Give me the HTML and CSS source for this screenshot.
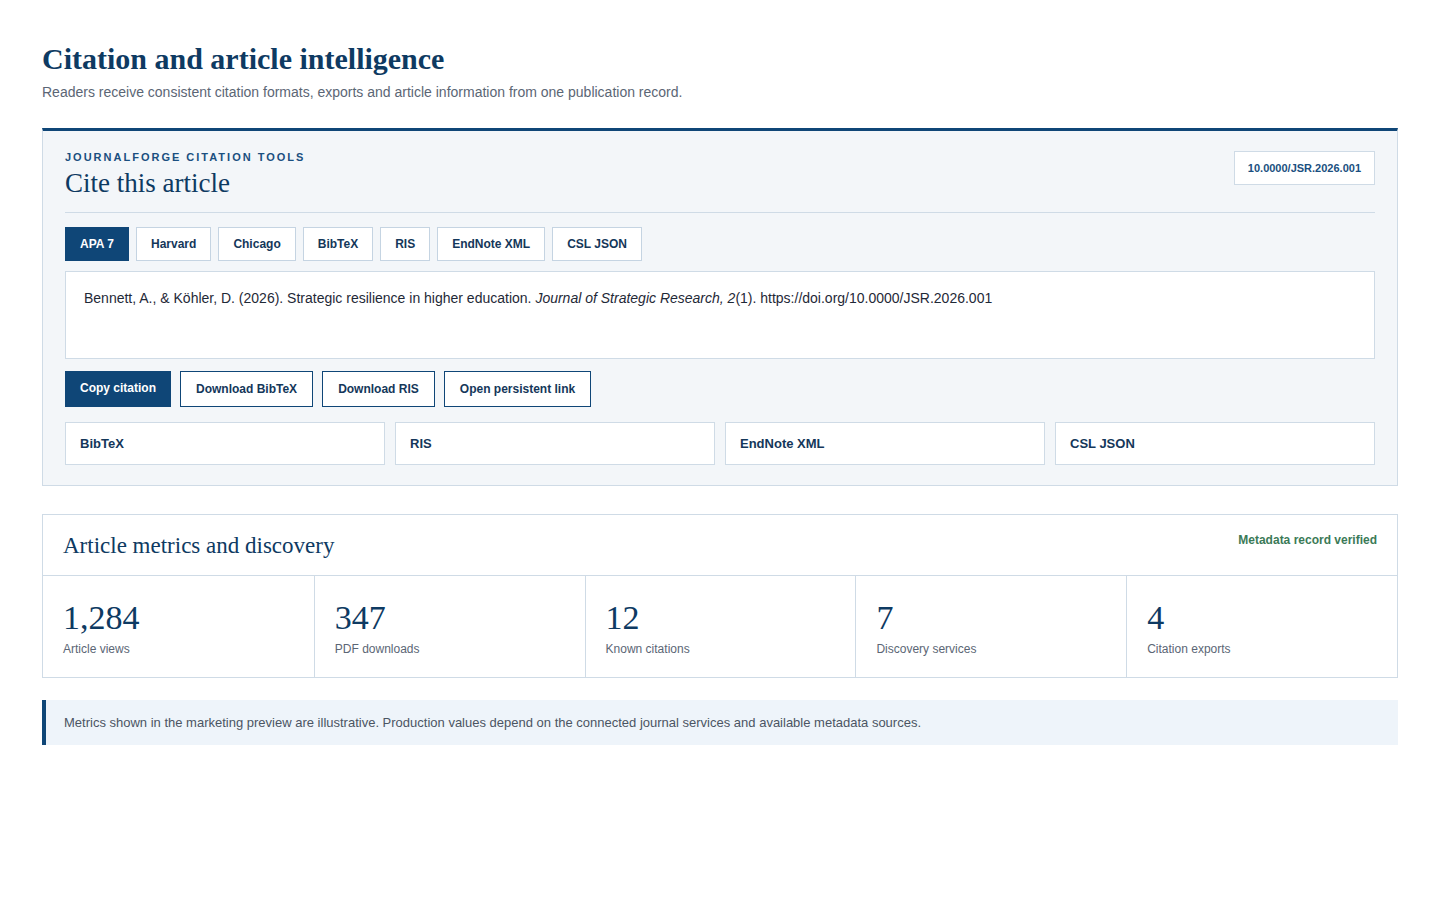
FILE: index.html
```html
<!DOCTYPE html>
<html lang="en">
<head>
  <meta charset="UTF-8">
  <title>Citation and article intelligence</title>
  <link rel="stylesheet" href="styles.css">
</head>
<body>

<h1>Citation and article intelligence</h1>
<p class="lead">Readers receive consistent citation formats, exports and article information from one publication record.</p>

<section class="cite-card">
  <div class="cite-head">
    <div>
      <div class="eyebrow">JournalForge citation tools</div>
      <h2>Cite this article</h2>
    </div>
    <span class="doi">10.0000/JSR.2026.001</span>
  </div>

  <div class="tabs">
    <button class="tab active">APA 7</button>
    <button class="tab">Harvard</button>
    <button class="tab">Chicago</button>
    <button class="tab">BibTeX</button>
    <button class="tab">RIS</button>
    <button class="tab">EndNote XML</button>
    <button class="tab">CSL JSON</button>
  </div>

  <div class="citation">
    Bennett, A., &amp; Köhler, D. (2026). Strategic resilience in higher education. <em>Journal of Strategic Research, 2</em>(1). https://doi.org/10.0000/JSR.2026.001
  </div>

  <div class="actions">
    <button class="btn primary">Copy citation</button>
    <button class="btn">Download BibTeX</button>
    <button class="btn">Download RIS</button>
    <button class="btn">Open persistent link</button>
  </div>

  <div class="exports">
    <div class="export">BibTeX</div>
    <div class="export">RIS</div>
    <div class="export">EndNote XML</div>
    <div class="export">CSL JSON</div>
  </div>
</section>

<section class="metrics">
  <div class="metrics-head">
    <h2>Article metrics and discovery</h2>
    <span class="verified">Metadata record verified</span>
  </div>
  <div class="stats">
    <div class="stat"><div class="num">1,284</div><div class="label">Article views</div></div>
    <div class="stat"><div class="num">347</div><div class="label">PDF downloads</div></div>
    <div class="stat"><div class="num">12</div><div class="label">Known citations</div></div>
    <div class="stat"><div class="num">7</div><div class="label">Discovery services</div></div>
    <div class="stat"><div class="num">4</div><div class="label">Citation exports</div></div>
  </div>
</section>

<p class="note">Metrics shown in the marketing preview are illustrative. Production values depend on the connected journal services and available metadata sources.</p>

</body>
</html>
```

FILE: styles.css
```css
* {
  box-sizing: border-box;
  margin: 0;
  padding: 0;
}

body {
  font-family: "Liberation Sans", Arial, sans-serif;
  background: #fff;
  color: #1f2937;
  padding: 41px 42px;
}

h1 {
  font-family: "Liberation Serif", "Times New Roman", serif;
  font-size: 30px;
  font-weight: bold;
  color: #0e3a62;
  line-height: 36px;
}

.lead {
  margin-top: 5px;
  font-size: 14px;
  color: #5b6675;
  line-height: 20px;
}

/* Citation card */
.cite-card {
  margin-top: 26px;
  background: #f3f6f9;
  border: 1px solid #cfdbe6;
  border-top: 3px solid #0f4677;
  padding: 19px 22px 20px;
}

.cite-head {
  display: flex;
  justify-content: space-between;
  align-items: flex-start;
  padding-bottom: 13px;
  border-bottom: 1px solid #cfdbe6;
}

.eyebrow {
  font-size: 11px;
  font-weight: bold;
  letter-spacing: 2px;
  text-transform: uppercase;
  color: #1a4f80;
  line-height: 14px;
}

.cite-head h2 {
  font-family: "Liberation Serif", "Times New Roman", serif;
  font-weight: normal;
  font-size: 27px;
  color: #0e3a62;
  line-height: 32px;
  margin-top: 3px;
}

.doi {
  margin-top: 1px;
  background: #fff;
  border: 1px solid #cfdbe6;
  font-size: 11px;
  font-weight: bold;
  color: #1a4f80;
  padding: 10px 13px;
  line-height: 12px;
}

.tabs {
  display: flex;
  gap: 7px;
  margin-top: 14px;
}

.tab {
  font-family: inherit;
  height: 34px;
  padding: 0 14px;
  background: #fff;
  border: 1px solid #c5d4e2;
  font-size: 12px;
  font-weight: bold;
  color: #14375a;
  cursor: pointer;
}

.tab.active {
  background: #0f4677;
  border-color: #0f4677;
  color: #fff;
}

.citation {
  margin-top: 10px;
  background: #fff;
  border: 1px solid #cfdbe6;
  height: 88px;
  padding: 16px 18px;
  font-size: 14px;
  line-height: 20px;
  color: #1f2937;
}

.actions {
  display: flex;
  gap: 9px;
  margin-top: 12px;
}

.btn {
  font-family: inherit;
  height: 36px;
  padding: 0 15px;
  background: #fff;
  border: 1px solid #0f4677;
  font-size: 12px;
  font-weight: bold;
  color: #14375a;
  cursor: pointer;
}

.btn.primary {
  background: #0f4677;
  color: #fff;
  padding: 0 14px 2px;
}

.exports {
  display: grid;
  grid-template-columns: repeat(4, 1fr);
  gap: 10px;
  margin-top: 15px;
}

.export {
  background: #fff;
  border: 1px solid #cfdbe6;
  height: 43px;
  padding: 0 14px;
  display: flex;
  align-items: center;
  font-size: 13px;
  font-weight: bold;
  color: #14375a;
}

/* Metrics */
.metrics {
  margin-top: 28px;
  border: 1px solid #cfdbe6;
  background: #fff;
}

.metrics-head {
  display: flex;
  justify-content: space-between;
  align-items: flex-start;
  padding: 16px 20px 14px;
  border-bottom: 1px solid #cfdbe6;
}

.metrics-head h2 {
  font-family: "Liberation Serif", "Times New Roman", serif;
  font-weight: normal;
  font-size: 23px;
  color: #0e3a62;
  line-height: 30px;
}

.verified {
  font-size: 12px;
  font-weight: bold;
  color: #3b7a57;
  margin-top: 2px;
}

.stats {
  display: grid;
  grid-template-columns: repeat(5, 1fr);
}

.stat {
  padding: 22px 20px 20px;
  border-left: 1px solid #cfdbe6;
}

.stat:first-child {
  border-left: none;
}

.num {
  font-family: "Liberation Serif", "Times New Roman", serif;
  font-size: 34px;
  color: #0e3a62;
  line-height: 40px;
}

.label {
  margin-top: 3px;
  font-size: 12px;
  color: #5b6675;
  line-height: 16px;
}

.note {
  margin-top: 22px;
  background: #eef4fa;
  border-left: 4px solid #0f4677;
  padding: 14px 18px;
  font-size: 13px;
  line-height: 17px;
  color: #4b5563;
}
```
